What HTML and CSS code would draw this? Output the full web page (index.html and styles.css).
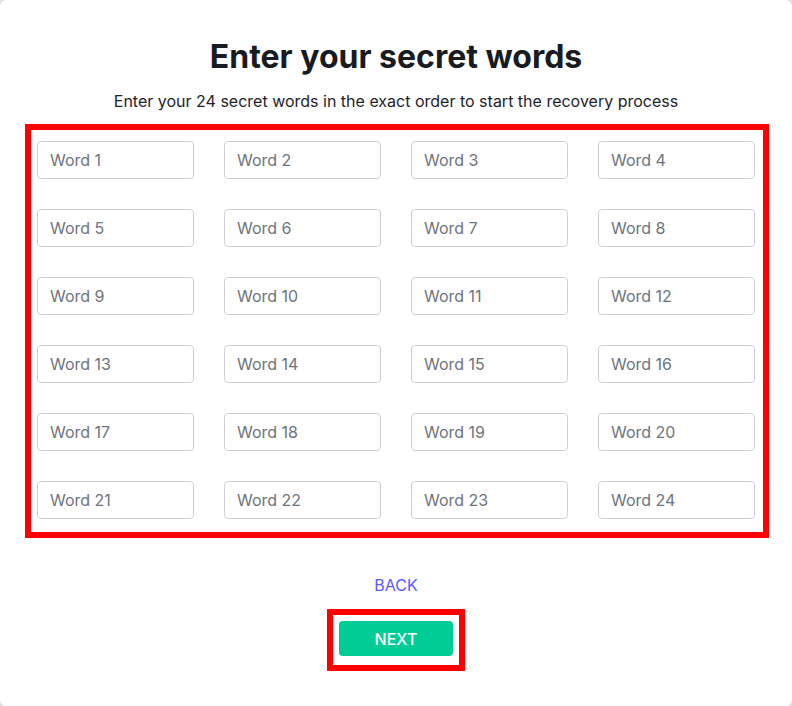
FILE: index.html
```html
<!DOCTYPE html>
<html lang="en">
<head>
    <meta charset="UTF-8">
    <meta name="viewport" content="width=device-width, initial-scale=1.0">
    <title>Enter your secret words</title>
    <link rel="stylesheet" href="styles.css">
</head>
<body>

    <!-- recovery modal -->
    <div class="modal">
        <h1 class="title">Enter your secret words</h1>
        <p class="subtitle">Enter your 24 secret words in the exact order to start the recovery process</p>

        <div class="words highlight">
            <input class="word" type="text" placeholder="Word 1">
            <input class="word" type="text" placeholder="Word 2">
            <input class="word" type="text" placeholder="Word 3">
            <input class="word" type="text" placeholder="Word 4">
            <input class="word" type="text" placeholder="Word 5">
            <input class="word" type="text" placeholder="Word 6">
            <input class="word" type="text" placeholder="Word 7">
            <input class="word" type="text" placeholder="Word 8">
            <input class="word" type="text" placeholder="Word 9">
            <input class="word" type="text" placeholder="Word 10">
            <input class="word" type="text" placeholder="Word 11">
            <input class="word" type="text" placeholder="Word 12">
            <input class="word" type="text" placeholder="Word 13">
            <input class="word" type="text" placeholder="Word 14">
            <input class="word" type="text" placeholder="Word 15">
            <input class="word" type="text" placeholder="Word 16">
            <input class="word" type="text" placeholder="Word 17">
            <input class="word" type="text" placeholder="Word 18">
            <input class="word" type="text" placeholder="Word 19">
            <input class="word" type="text" placeholder="Word 20">
            <input class="word" type="text" placeholder="Word 21">
            <input class="word" type="text" placeholder="Word 22">
            <input class="word" type="text" placeholder="Word 23">
            <input class="word" type="text" placeholder="Word 24">
        </div>

        <div class="actions">
            <a href="#" class="back-link">BACK</a>
            <div class="next-wrap highlight">
                <button class="next-button">NEXT</button>
            </div>
        </div>
    </div>

</body>
</html>
```

FILE: styles.css
```css
body {
    margin: 0;
    background-color: #d9dce1;
    font-family: Inter, "Noto Sans", Arial, sans-serif;
}

/* 弹窗 */
.modal {
    width: 792px;
    height: 706px;
    box-sizing: border-box;
    background-color: #fff;
    border-radius: 6px;
    padding-top: 38px;
    display: flex;
    flex-direction: column;
    align-items: center;
}

.title {
    margin: 0;
    font-size: 32px;
    line-height: 38px;
    font-weight: 700;
    color: #181b21;
}

.subtitle {
    margin: 15px 0 0;
    font-size: 16px;
    line-height: 20px;
    color: #1f2329;
}

/* red marker boxes */
.highlight {
    border: 6px solid #ff0000;
}

.words {
    margin: 13px 0 0 2px;
    width: 744px;
    height: 414px;
    box-sizing: border-box;
    padding: 11px 8px 13px 6px;
    display: grid;
    grid-template-columns: repeat(4, 157px);
    grid-auto-rows: 38px;
    column-gap: 30px;
    row-gap: 30px;
}

.word {
    box-sizing: border-box;
    width: 157px;
    height: 38px;
    margin: 0;
    padding: 0 12px;
    border: 1px solid #cdd1d7;
    border-radius: 4px;
    font-family: inherit;
    font-size: 16px;
    color: #1f2329;
    outline: none;
}

.word::placeholder {
    color: #6e747c;
}

.actions {
    margin-top: 37px;
    display: flex;
    flex-direction: column;
    align-items: center;
}

.back-link {
    font-size: 16px;
    line-height: 20px;
    color: #5b5bff;
    text-decoration: none;
}

.next-wrap {
    margin-top: 14px;
    padding: 6px 6px 9px;
}

.next-button {
    display: block;
    width: 114px;
    height: 35px;
    border: none;
    border-radius: 4px;
    background-color: #00cc96;
    color: #fff;
    font-family: inherit;
    font-size: 16px;
    font-weight: 500;
    cursor: pointer;
}
```
